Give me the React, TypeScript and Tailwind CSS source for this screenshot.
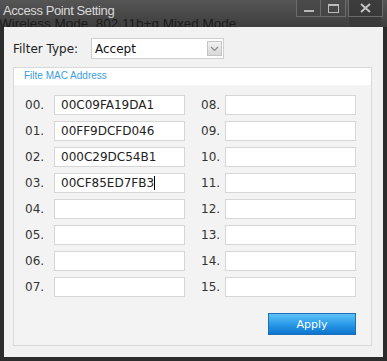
import React from 'react';

const macs = ['00C09FA19DA1', '00FF9DCFD046', '000C29DC54B1', '00CF85ED7FB3', '', '', '', ''];

function MacRow({ label, value, caret, labelWidth }: { label: string; value: string; caret?: boolean; labelWidth: string }) {
  return (
    <div className="flex items-center h-[20px]">
      <span className={`${labelWidth} text-[12px] text-[#333]`}>{label}</span>
      <div className="w-[131px] h-[20px] bg-white border border-[#d6d6d6] flex items-center pl-[6px] text-[12px] text-[#222]">
        {value}
        {caret && <span className="inline-block w-px h-[14px] bg-black"></span>}
      </div>
    </div>
  );
}

export default function App() {
  return (
    <div
      className="w-[387px] h-[361px] bg-[#2c2c2c] flex flex-col overflow-hidden"
      style={{ fontFamily: '"DejaVu Sans", Verdana, sans-serif' }}
    >
      {/* Title bar */}
      <div className="relative h-[27px] bg-gradient-to-b from-[#555555] to-[#3e3e3e] shrink-0 overflow-hidden">
        {/* bleed-through of the window behind */}
        <div
          className="absolute left-[-1px] top-[14px] text-[13.5px] text-[#1c1c1c] whitespace-pre"
          style={{ fontFamily: '"Liberation Sans", Arial, sans-serif' }}
        >
          Wireless Mode  802.11b+g Mixed Mode
        </div>
        <div className="absolute left-[349px] top-[16px] w-[32px] h-[11px] bg-[#3a3a3a]"></div>
        <div
          className="absolute left-[3px] top-[1px] text-[13px] tracking-[-0.4px] text-[#d9d9d9]"
          style={{ fontFamily: '"Liberation Sans", Arial, sans-serif' }}
        >
          Access Point Setting
        </div>
        {/* window buttons */}
        <div className="absolute left-[296px] top-0 flex">
          <div className="w-[25px] h-[17px] border border-[#6b6b6b] border-t-0 bg-[#444]/60 flex items-end justify-center pb-[4px]">
            <div className="w-[10px] h-[2px] bg-[#b8b8b8]"></div>
          </div>
          <div className="w-[25px] h-[17px] border border-l-0 border-[#6b6b6b] border-t-0 bg-[#444]/60 flex items-center justify-center">
            <div className="w-[11px] h-[9px] border border-[#bdbdbd] border-t-2"></div>
          </div>
          <div className="ml-[2px] w-[35px] h-[17px] border border-[#6b6b6b] border-t-0 bg-[#333]/70 flex items-center justify-center">
            <svg width="11" height="10" viewBox="0 0 11 10">
              <path d="M1 1 L10 9 M10 1 L1 9" stroke="#c4c4c4" strokeWidth="2" />
            </svg>
          </div>
        </div>
      </div>

      {/* Client area */}
      <div className="mx-[4px] h-[330px] bg-[#f1f1f1] pl-[9px] pr-[10px] pt-[11px] flex flex-col">
        <div className="flex items-center h-[21px]">
          <span className="w-[78px] text-[12px] text-[#222]">Filter Type:</span>
          <div className="w-[133px] h-[21px] bg-white border border-[#cfcfcf] flex items-center pl-[3px] text-[12px] text-[#111]">
            <span className="flex-1">Accept</span>
            <div className="w-[15px] h-[15px] mr-[1px] border border-[#c4c4c4] bg-gradient-to-b from-[#f2f2f2] to-[#d8d8d8] flex items-center justify-center">
              <svg width="9" height="6" viewBox="0 0 9 6">
                <path d="M1 1 L4.5 4.5 L8 1" stroke="#8a8a8a" strokeWidth="1.2" fill="none" />
              </svg>
            </div>
          </div>
        </div>

        {/* Group box */}
        <div className="mt-[8px] w-[359px] h-[279px] border border-[#d9d9d9] bg-[#f3f3f3] flex flex-col">
          <div
            className="h-[17px] bg-white pl-[10px] text-[10px] leading-[15px] text-[#3a9ce0]"
            style={{ fontFamily: '"Liberation Sans", Arial, sans-serif' }}
          >
            Filte MAC Address
          </div>
          <div className="pl-[11px] pt-[10px] flex gap-[16px]">
            <div className="flex flex-col gap-[6px]">
              {macs.map((m, i) => (
                <MacRow key={i} label={`0${i}.`} value={m} caret={i === 3} labelWidth="w-[29px]" />
              ))}
            </div>
            <div className="flex flex-col gap-[6px]">
              {macs.map((_, i) => (
                <MacRow key={i} label={`${String(i + 8).padStart(2, '0')}.`} value="" labelWidth="w-[24px]" />
              ))}
            </div>
          </div>
          <div className="flex justify-end pr-[15px] mt-[16px]">
            <button className="w-[88px] h-[22px] border border-[#1d6fb5] bg-gradient-to-b from-[#5ec3f7] via-[#2a9be8] to-[#0c74cf] text-white text-[11px] leading-none">
              Apply
            </button>
          </div>
        </div>
      </div>
    </div>
  );
}
